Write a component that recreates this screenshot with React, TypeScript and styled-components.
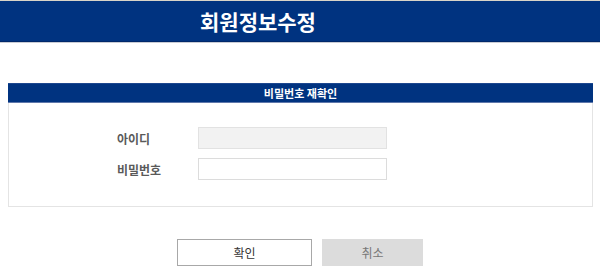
import React from "react";
import styled, { createGlobalStyle } from "styled-components";

const Global = createGlobalStyle`
  html, body { margin: 0; padding: 0; background: #fff; }
  body { font-family: "Noto Sans CJK KR", "Noto Sans", sans-serif; }
  * { box-sizing: border-box; }
`;

const Header = styled.header`
  height: 43px;
  background: #003380;
  border-top: 1px solid #d8d4c8;
  border-bottom: 1px solid #c9ccd4;
  box-shadow: inset 0 -1px 0 #00286a;
  display: flex;
  align-items: center;
  padding-left: 200px;
`;

const Title = styled.h1`
  margin: 0;
  color: #fff;
  font-size: 21px;
  font-weight: 700;
  letter-spacing: 0;
  line-height: 1;
`;

const Section = styled.section`
  width: 585px;
  margin: 40px 0 0 8px;
`;

const SectionHead = styled.div`
  height: 20px;
  background: #003380;
  border-bottom: 1px solid #5f78ab;
  border-top: 1px solid #1d478f;
  color: #fff;
  font-size: 11px;
  font-weight: 700;
  display: flex;
  align-items: center;
  justify-content: center;
`;

const SectionBody = styled.div`
  border: 1px solid #e4e4e4;
  border-top: none;
  padding: 24px 0 26px 108px;
  display: flex;
  flex-direction: column;
  gap: 9px;
`;

const Row = styled.div`
  display: flex;
  align-items: center;
  height: 22px;
`;

const Label = styled.label`
  width: 81px;
  font-size: 12px;
  font-weight: 700;
  color: #5a5a5a;
`;

const Input = styled.input<{ $disabled?: boolean }>`
  width: 189px;
  height: 22px;
  border: 1px solid ${(p) => (p.$disabled ? "#e2e2e2" : "#dcdcdc")};
  background: ${(p) => (p.$disabled ? "#f2f2f2" : "#fff")};
  padding: 0 6px;
  font-size: 12px;
  outline: none;
`;

const Buttons = styled.div`
  display: flex;
  justify-content: center;
  gap: 10px;
  margin-top: 32px;
`;

const Button = styled.button<{ $variant: "primary" | "cancel" }>`
  height: 27px;
  width: ${(p) => (p.$variant === "primary" ? "135px" : "101px")};
  border: 1px solid ${(p) => (p.$variant === "primary" ? "#a8a8a8" : "#dcdcdc")};
  background: ${(p) => (p.$variant === "primary" ? "#fff" : "#dcdcdc")};
  color: ${(p) => (p.$variant === "primary" ? "#333" : "#777")};
  font-family: "Noto Sans CJK KR", "Noto Sans", sans-serif;
  font-size: 12px;
  padding: 0;
  cursor: pointer;
`;

export default function App() {
  return (
    <>
      <Global />
      <Header>
        <Title>회원정보수정</Title>
      </Header>
      <Section>
        <SectionHead>비밀번호 재확인</SectionHead>
        <SectionBody>
          <Row>
            <Label>아이디</Label>
            <Input $disabled readOnly />
          </Row>
          <Row>
            <Label>비밀번호</Label>
            <Input type="password" />
          </Row>
        </SectionBody>
      </Section>
      <Buttons>
        <Button $variant="primary">확인</Button>
        <Button $variant="cancel">취소</Button>
      </Buttons>
    </>
  );
}
